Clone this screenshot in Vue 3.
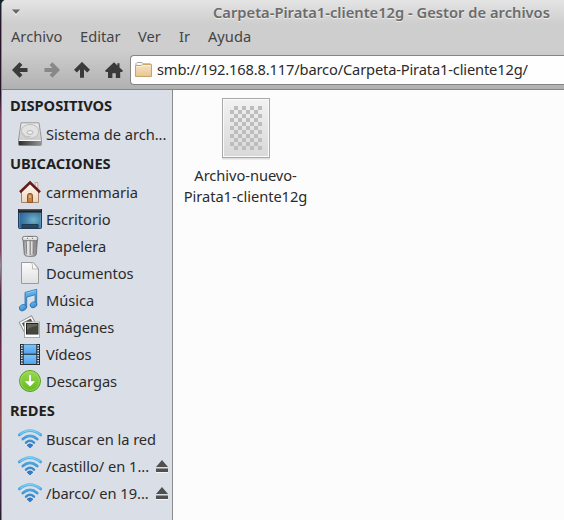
<script setup>
const menus = [
  { label: 'Archivo', w: 69 },
  { label: 'Editar', w: 58 },
  { label: 'Ver', w: 41 },
  { label: 'Ir', w: 29 },
  { label: 'Ayuda', w: 60 },
]
const sections = [
  { title: 'DISPOSITIVOS', items: [{ icon: 'disk', label: 'Sistema de arch...' }] },
  {
    title: 'UBICACIONES',
    items: [
      { icon: 'home', label: 'carmenmaria' },
      { icon: 'desktop', label: 'Escritorio' },
      { icon: 'trash', label: 'Papelera' },
      { icon: 'doc', label: 'Documentos' },
      { icon: 'music', label: 'Música' },
      { icon: 'images', label: 'Imágenes' },
      { icon: 'video', label: 'Vídeos' },
      { icon: 'download', label: 'Descargas' },
    ],
  },
  {
    title: 'REDES',
    items: [
      { icon: 'wifi', label: 'Buscar en la red' },
      { icon: 'wifi', label: '/castillo/ en 1...', eject: true },
      { icon: 'wifi', label: '/barco/ en 19...', eject: true },
    ],
  },
]
const holes = [0, 1, 2, 3, 4, 5, 6, 7]
</script>

<template>
  <div class="screen">
    <svg class="defs" width="0" height="0">
      <defs>
        <linearGradient id="gMetal" x1="0" y1="0" x2="0" y2="1"><stop offset="0" stop-color="#e9e9e9" /><stop offset="1" stop-color="#c4c4c4" /></linearGradient>
        <linearGradient id="gFront" x1="0" y1="0" x2="1" y2="0"><stop offset="0" stop-color="#2c2c2c" /><stop offset="1" stop-color="#969696" /></linearGradient>
        <radialGradient id="gDesk" cx=".65" cy=".55" r=".7"><stop offset="0" stop-color="#73b3c6" /><stop offset=".5" stop-color="#4583ad" /><stop offset="1" stop-color="#2a5f97" /></radialGradient>
        <linearGradient id="gCan" x1="0" y1="0" x2="1" y2="0"><stop offset="0" stop-color="#818181" /><stop offset=".35" stop-color="#e6e6e6" /><stop offset="1" stop-color="#777" /></linearGradient>
        <linearGradient id="gPage" x1="0" y1="0" x2="0" y2="1"><stop offset="0" stop-color="#fbfbfb" /><stop offset="1" stop-color="#e0e0e0" /></linearGradient>
        <linearGradient id="gBlue" x1="0" y1="0" x2="0" y2="1"><stop offset="0" stop-color="#64bbef" /><stop offset="1" stop-color="#3a85cc" /></linearGradient>
        <linearGradient id="gFilm" x1="0" y1="0" x2="0" y2="1"><stop offset="0" stop-color="#79c5fa" /><stop offset="1" stop-color="#54a2ee" /></linearGradient>
        <linearGradient id="gGreen" x1="0" y1="0" x2="0" y2="1"><stop offset="0" stop-color="#9bd957" /><stop offset="1" stop-color="#63b81f" /></linearGradient>
        <linearGradient id="gWall" x1="0" y1="0" x2="0" y2="1"><stop offset="0" stop-color="#fffaf4" /><stop offset="1" stop-color="#ecd5bb" /></linearGradient>
        <linearGradient id="gFolder" x1="0" y1="0" x2="0" y2="1"><stop offset="0" stop-color="#f8e3c1" /><stop offset="1" stop-color="#e7c592" /></linearGradient>
        <linearGradient id="gWave" gradientUnits="userSpaceOnUse" x1="0" y1="3" x2="0" y2="21"><stop offset="0" stop-color="#58bced" /><stop offset="1" stop-color="#2d71bf" /></linearGradient>
        <linearGradient id="gFile" x1="0" y1="0" x2="0" y2="1"><stop offset="0" stop-color="#f2f2f2" /><stop offset="1" stop-color="#d8d8d8" /></linearGradient>
      </defs>
    </svg>
    <div class="window">
      <header class="chrome">
        <div class="titlebar">
          <svg class="tri" width="10" height="7" viewBox="0 0 10 7"><path d="M1 1.5h8L5 6.5z" fill="#f5f5f5" /><path d="M.8 .4h8.4L5 5z" fill="#696969" /></svg>
          <span class="title">Carpeta-Pirata1-cliente12g - Gestor de archivos</span>
        </div>
        <nav class="menubar">
          <span v-for="m in menus" :key="m.label" :style="{ width: m.w + 'px' }">{{ m.label }}</span>
        </nav>
        <div class="toolbar">
          <svg class="nav" width="16" height="16" viewBox="0 0 16 16"><path d="M9 1.6L2.7 8 9 14.4M3 8h12.5" /></svg>
          <svg class="nav off" width="16" height="16" viewBox="0 0 16 16"><path d="M7 1.6L13.3 8 7 14.4M13 8H.5" /></svg>
          <svg class="nav up" width="16" height="16" viewBox="0 0 16 16"><path d="M1.4 9.2L8 2.7l6.6 6.5M8 3v12.7" /></svg>
          <svg class="house" width="18" height="16" viewBox="0 0 18 16"><path d="M9 .3L12.4 3.5V1.2h2.1v4.2L18 8.8l-1 1.1h-1.8V16h-4.4v-4.8H7.4V16H3V9.9H1L0 8.8z" fill="#3a3a3a" /></svg>
          <div class="address">
            <svg width="17" height="15" viewBox="0 0 17 15"><path d="M1 5V1.5L2 .5h5l1 1.3h7.5V5" fill="#f7f7f7" stroke="#aaa" /><path d="M.5 3.5h6l1-.9h9v11.9H.5z" fill="url(#gFolder)" stroke="#c9a26a" /><path d="M1.5 4.5h5.5l1-.9h7.5" fill="none" stroke="#fff0d8" /></svg>
            <span>smb://192.168.8.117/barco/Carpeta-Pirata1-cliente12g/</span>
          </div>
        </div>
      </header>
      <main class="body">
        <aside class="side">
          <section v-for="s in sections" :key="s.title">
            <h2>{{ s.title }}</h2>
            <div v-for="i in s.items" :key="i.label" class="row">
              <svg class="ico" width="24" height="24" viewBox="0 0 24 24">
                <g v-if="i.icon === 'disk'">
                  <path d="M3 .8h18L23.5 18v4.6q0 .9-1 .9h-21q-1 0-1-.9V18z" fill="url(#gMetal)" stroke="#999" />
                  <path d="M.8 19h22.5v3.4q0 .8-1 .8H1.8q-1 0-1-.8z" fill="url(#gFront)" />
                  <path d="M1.2 18.4h21.6" stroke="#fafafa" />
                  <ellipse cx="12" cy="9.4" rx="8.8" ry="7" fill="#e2e2e2" stroke="#bebebe" />
                  <ellipse cx="12" cy="10.5" rx="3" ry="1.8" fill="#f2f2f2" stroke="#b2b2b2" />
                  <path d="M4.5 10.5q1.5 5 8 4" stroke="#bbb" fill="none" />
                </g>
                <g v-else-if="i.icon === 'home'">
                  <path d="M17.2 2.5h2.6v6l-2.6-2z" fill="#f8eadb" stroke="#b49a80" stroke-width=".8" />
                  <path d="M3.5 11L12 3.2l8.5 7.8v11.5h-17z" fill="url(#gWall)" stroke="#a18468" />
                  <path d="M2 12.2L12 2.6l10 9.6" fill="none" stroke="#681b19" stroke-width="2.6" stroke-linejoin="miter" stroke-linecap="butt" />
                  <path d="M9.5 22.4v-7q0-2 2.5-2t2.5 2v7z" fill="#c58246" stroke="#8c562b" />
                  <path d="M11 15.4h2v2.4h-2z" fill="#e7b275" />
                </g>
                <g v-else-if="i.icon === 'desktop'">
                  <rect x=".5" y="2.5" width="23" height="19" rx="1" fill="url(#gDesk)" stroke="#1d4063" />
                  <path d="M0 2h24v3.6H0z" fill="#222" /><path d="M1 2.8h22" stroke="#6d6d6d" />
                  <path d="M1.5 6v14.5h21V6" fill="none" stroke="#78abc8" stroke-opacity=".4" />
                  <path d="M4 17.5h16V21H4z" fill="#2d4659" stroke="#1b3a54" />
                </g>
                <g v-else-if="i.icon === 'trash'">
                  <path d="M5 4.5h14.5l-1.2 16q-.2 2-6 2t-6-2z" fill="url(#gCan)" stroke="#6d6d6d" stroke-width=".8" />
                  <path d="M8.2 7l.7 13M12.2 7v14M16 7l-.6 13" stroke="#808080" />
                  <path d="M9.7 7.3l.2 13M13.7 7.3v13" stroke="#eee" stroke-width=".8" />
                  <rect x="4.3" y="2.4" width="15.6" height="4.2" rx="2" fill="#ddd" stroke="#777" stroke-width=".9" />
                  <path d="M9.5 5V2.5h5V5" fill="none" stroke="#777" /><path d="M6 3.6h12" stroke="#f6f6f6" stroke-width=".8" />
                </g>
                <g v-else-if="i.icon === 'doc'">
                  <path d="M3.5 1.5h11.8l5.2 6v15h-17z" fill="url(#gPage)" stroke="#9b9b9b" />
                  <path d="M13.5 1.5q1.8 2.5.9 6.5 3-.6 6.1.5l-5.4-7z" fill="#fff" stroke="#a7a7a7" stroke-width=".8" />
                </g>
                <g v-else-if="i.icon === 'music'" fill="url(#gBlue)" stroke="#286fae" stroke-width=".8">
                  <path d="M7 4.4L18.7 1.3v15.5h-1.6V6.7L8.7 9.2v10.4H7z" />
                  <ellipse cx="4.8" cy="19.7" rx="3.6" ry="2.9" transform="rotate(-25 4.8 19.7)" />
                  <ellipse cx="15.5" cy="16.8" rx="3.5" ry="2.8" transform="rotate(-25 15.5 16.8)" />
                  <path d="M8 5.2l9.8-2.7" stroke="#8dd2fa" />
                </g>
                <g v-else-if="i.icon === 'images'">
                  <g transform="rotate(-28 10 9)"><rect x="3" y="3.4" width="14" height="14" fill="#fafafa" stroke="#999" /><rect x="5" y="5.4" width="10" height="9" fill="#52534a" /></g>
                  <rect x="6.5" y="7" width="15" height="15.5" fill="#fff" stroke="#aaa" />
                  <rect x="8.5" y="8.5" width="11.5" height="10.5" fill="#64665a" stroke="#202020" />
                  <path d="M9 15q5-4 10.5-4v7.5H9z" fill="#45473c" />
                </g>
                <g v-else-if="i.icon === 'video'">
                  <rect x="2" y="2" width="20" height="21" fill="#242c33" />
                  <rect x="5.7" y="2.5" width="12.6" height="9.2" fill="url(#gFilm)" /><rect x="5.7" y="12.8" width="12.6" height="9.2" fill="url(#gFilm)" />
                  <g fill="#e5e9ed"><template v-for="n in holes" :key="n"><rect x="3" :y="3 + n * 2.5" width="1.7" height="1.4" /><rect x="19.3" :y="3 + n * 2.5" width="1.7" height="1.4" /></template></g>
                </g>
                <g v-else-if="i.icon === 'download'">
                  <circle cx="12" cy="12" r="10.5" fill="url(#gGreen)" stroke="#56a31d" />
                  <circle cx="12" cy="12" r="9.4" fill="none" stroke="#b2e378" stroke-opacity=".55" />
                  <path d="M11 6.2h2v6h4.2L12 17.4l-5.2-5.2H11z" fill="#fff" />
                </g>
                <g v-else fill="none" stroke="url(#gWave)">
                  <path d="M1.3 7.9Q12-.6 22.7 7.9" stroke-width="2.8" stroke-linecap="round" />
                  <path d="M4.8 12Q12 5.8 19.2 12" stroke-width="2.7" stroke-linecap="round" />
                  <path d="M8 15.6Q12 12 16 15.6" stroke-width="2.5" stroke-linecap="round" />
                  <path d="M9 18.2q3-2.8 6 0L12 21z" fill="#347ec7" stroke="#2c6db3" stroke-width=".7" />
                  <path d="M1.8 7.4Q12-.7 22.2 7.4" stroke="#90d9f6" stroke-width=".8" />
                </g>
              </svg>
              <span class="label">{{ i.label }}</span>
              <svg v-if="i.eject" class="eject" width="12" height="13" viewBox="0 0 12 13"><path d="M6 0l6 7H0zM0 8.5h12V12H0z" fill="#505050" /><path d="M0 12.5h12" stroke="#f5f5f5" /></svg>
            </div>
          </section>
        </aside>
        <div class="files">
          <div class="file">
            <svg width="50" height="64" viewBox="0 0 50 64">
              <defs><pattern id="checks" width="8" height="8" patternUnits="userSpaceOnUse" x="9" y="9"><path d="M4 0h4v4H4zM0 4h4v4H0z" fill="#bdbdbd" /></pattern></defs>
              <path d="M1 61.5h48" stroke="#c9c9c9" stroke-width="2" stroke-opacity=".6" />
              <rect x="1.5" y="1.5" width="47" height="59" fill="url(#gFile)" stroke="#a9a9a9" />
              <rect x="2.5" y="2.5" width="45" height="57" fill="none" stroke="#fafafa" />
              <rect x="9" y="9" width="32" height="44" fill="url(#checks)" />
            </svg>
            <span>Archivo-nuevo-</span>
            <span>Pirata1-cliente12g</span>
          </div>
        </div>
      </main>
    </div>
  </div>
</template>

<style>
body { margin: 0; overflow: hidden; }
</style>

<style scoped>
.screen { box-sizing: border-box; width: 564px; height: 520px; padding-left: 1px; overflow: hidden; font-family: 'Noto Sans', sans-serif; font-size: 14.67px; color: #2b2b2b; background: linear-gradient(#10262b 0, #28142b 30px, #24152a 95px, #733957 115px, #733957 250px, #928b92 265px, #5b2b46 290px, #25202a 310px, #6b274b 350px, #8c4544 425px, #472550 480px, #242029); }
.defs { display: block; height: 0; width: 0; }
.window { box-sizing: border-box; width: 563px; height: 520px; border-left: 1px solid #858585; border-radius: 5px 0 0 0; overflow: hidden; background: #fcfcfc; }
.chrome { box-sizing: border-box; height: 90px; border-bottom: 1px solid #858585; background: linear-gradient(#e4e4e4 0, #cecece 24px, #cecece 50px, #b1b1b1 89px); }
.titlebar { height: 24px; display: flex; align-items: center; }
.tri { margin-left: 9px; }
.title { margin-left: 192px; white-space: nowrap; font-weight: 600; letter-spacing: 0.02px; color: #6b6b6b; text-shadow: 0 1px 0 #eee; }
.menubar { box-sizing: border-box; display: flex; height: 26px; line-height: 24px; padding-left: 9px; color: #444; }
.toolbar { display: flex; height: 39px; align-items: center; padding-left: 10px; }
.nav { margin-right: 16px; fill: none; stroke: #3a3a3a; stroke-width: 4; }
.nav.off { stroke: #888; margin-right: 14px; }
.nav.up { margin-right: 15px; }
.house { margin-right: 7px; }
.address { box-sizing: border-box; flex: 1; height: 30px; display: flex; align-items: center; gap: 5px; padding-left: 4px; border: 1px solid #858585; border-right: 0; border-radius: 4px 0 0 4px; background: #fefefe; white-space: nowrap; letter-spacing: -0.155px; }
.address span { padding-bottom: 2px; }
.body { display: flex; height: 430px; }
.side { box-sizing: border-box; width: 171px; border-right: 1px solid #8b8b8b; background: #dadee6; }
h2 { margin: 0; padding-left: 8px; height: 31px; line-height: 31px; font-size: 14.67px; font-weight: 700; color: #1f1f1f; }
.row { box-sizing: border-box; display: flex; align-items: center; height: 27px; padding-left: 16px; padding-bottom: 1px; white-space: nowrap; }
.ico { flex: none; margin-right: 4px; }
.label { flex: 1; letter-spacing: -0.04px; padding-bottom: 1px; }
.eject { flex: none; margin-right: 4px; }
.files { flex: 1; padding: 7px 0 0 11px; }
.file { width: 123px; display: flex; flex-direction: column; align-items: center; line-height: 21px; letter-spacing: -0.06px; }
.file svg { margin-bottom: 4px; margin-left: 1px; }
.file span { white-space: nowrap; }
</style>
